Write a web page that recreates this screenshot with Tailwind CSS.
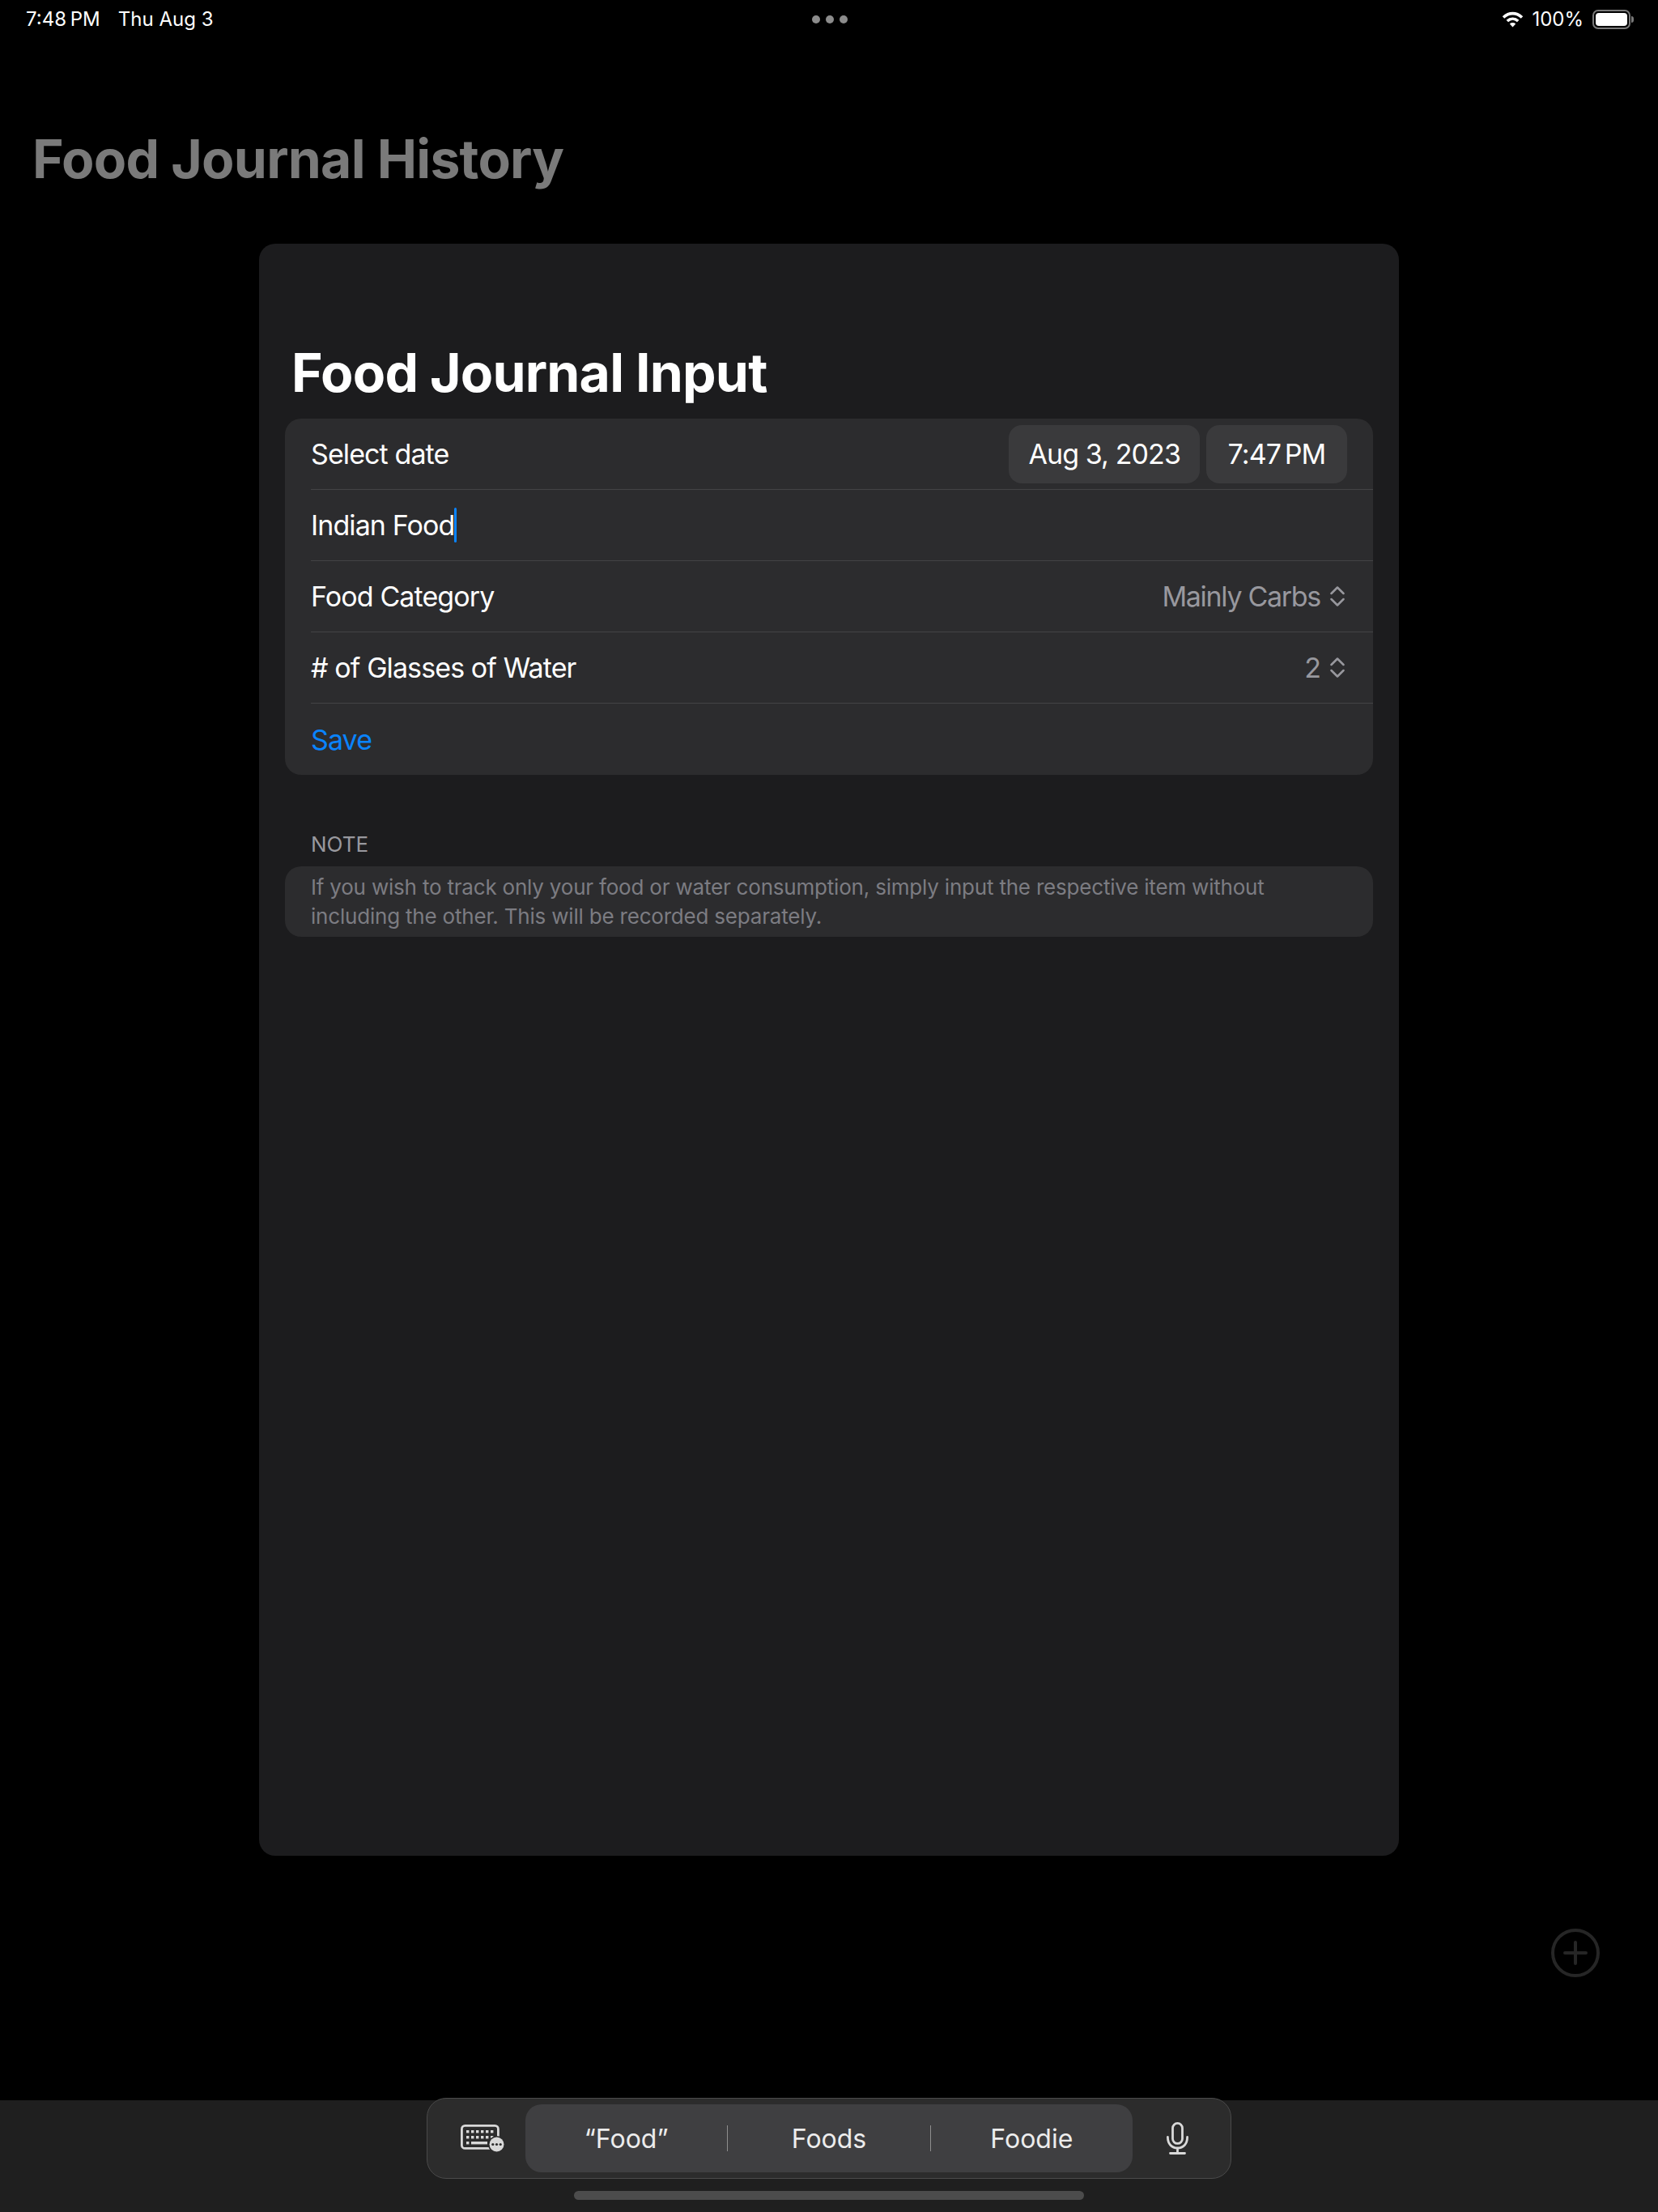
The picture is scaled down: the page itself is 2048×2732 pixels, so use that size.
<!DOCTYPE html>
<html lang="en">
<head>
    <meta charset="UTF-8">
    <meta name="viewport" content="width=device-width, initial-scale=1.0">
    <title>Food Journal Input</title>
    <script src="https://cdn.jsdelivr.net/npm/@tailwindcss/browser@4"></script>
</head>
<body class="bg-black">
    <div class="relative flex flex-col w-[2048px] h-[2732px] overflow-hidden bg-black font-['Inter',sans-serif] text-white">

        <!-- Status bar -->
        <div class="relative flex items-center justify-between h-[48px] pl-[32px] pr-[30px] text-[24px]">
            <div class="flex gap-[22px]">
                <span class="[word-spacing:-2px]">7:48 PM</span>
                <span>Thu Aug 3</span>
            </div>
            <div class="absolute left-[1003px] top-[19px] flex gap-[7px]">
                <span class="w-[10px] h-[10px] rounded-full bg-[#8c8c8c]"></span>
                <span class="w-[10px] h-[10px] rounded-full bg-[#8c8c8c]"></span>
                <span class="w-[10px] h-[10px] rounded-full bg-[#8c8c8c]"></span>
            </div>
            <div class="flex items-center">
                <svg class="w-[27px] h-[20px]" viewBox="0 0 27 20" fill="none">
                    <path d="M2 7.5C9 1 18 1 25 7.5" stroke="#fff" stroke-width="3.6" stroke-linecap="butt"/>
                    <path d="M6.8 12C10.8 8.3 16.2 8.3 20.2 12" stroke="#fff" stroke-width="3.6"/>
                    <path d="M13.5 19.5L9.8 15.4C12 13.6 15 13.6 17.2 15.4Z" fill="#fff"/>
                </svg>
                <span class="ml-[10px]">100%</span>
                <div class="ml-[11px] flex items-center">
                    <div class="w-[47px] h-[24px] rounded-[7px] border-2 border-[#7a7a7a] p-[2px]">
                        <div class="w-full h-full rounded-[4px] bg-white"></div>
                    </div>
                    <div class="ml-[1px] w-[3px] h-[8px] rounded-r-full bg-[#7a7a7a]"></div>
                </div>
            </div>
        </div>

        <!-- Page behind the sheet -->
        <h1 class="mt-[112px] ml-[40px] text-[66px] leading-[72px] font-bold tracking-[-0.75px] text-[#7a7a7a]">Food Journal History</h1>

        <!-- Add button -->
        <svg class="absolute left-[1916px] top-[2382px] w-[60px] h-[60px]" viewBox="0 0 60 60" fill="none" stroke="#262626" stroke-width="4" stroke-linecap="round">
            <circle cx="30" cy="30" r="28"/>
            <path d="M17 30H43M30 17V43"/>
        </svg>

        <!-- Sheet -->
        <div class="absolute left-[320px] top-[301px] flex flex-col w-[1408px] h-[1991px] rounded-[20px] bg-[#1c1c1e] px-[32px]">
            <h2 class="mt-[123px] ml-[8px] text-[66px] leading-[72px] font-bold tracking-[-0.8px]">Food Journal Input</h2>

            <div class="mt-[21px] rounded-[20px] bg-[#2c2c2e] text-[34px] tracking-[-0.9px]">
                <div class="flex items-center justify-between h-[88px] ml-[32px] pr-[32px] border-b border-[#434345]">
                    <span>Select date</span>
                    <div class="flex gap-[8px]">
                        <span class="flex items-center h-[72px] px-[24px] rounded-[16px] bg-[#3a3a3c]">Aug 3, 2023</span>
                        <span class="flex items-center justify-center w-[174px] h-[72px] rounded-[16px] bg-[#3a3a3c] [word-spacing:-4px]">7:47 PM</span>
                    </div>
                </div>
                <div class="flex items-center h-[88px] ml-[32px] border-b border-[#434345]">
                    <span>Indian Food</span>
                    <span class="w-[3px] h-[43px] rounded-full bg-[#0a84ff]"></span>
                </div>
                <div class="flex items-center justify-between h-[88px] ml-[32px] pr-[35px] border-b border-[#434345]">
                    <span>Food Category</span>
                    <div class="flex items-center gap-[12px] text-[#98989e]">
                        <span class="tracking-[-1.3px]">Mainly Carbs</span>
                        <svg class="w-[18px] h-[25px]" viewBox="0 0 18 25" fill="none" stroke="#98989e" stroke-width="2.5" stroke-linecap="round" stroke-linejoin="round">
                            <path d="M1.5 9L9 1.5L16.5 9M1.5 16L9 23.5L16.5 16"/>
                        </svg>
                    </div>
                </div>
                <div class="flex items-center justify-between h-[88px] ml-[32px] pr-[35px] border-b border-[#434345]">
                    <span># of Glasses of Water</span>
                    <div class="flex items-center gap-[12px] text-[#98989e]">
                        <span>2</span>
                        <svg class="w-[18px] h-[25px]" viewBox="0 0 18 25" fill="none" stroke="#98989e" stroke-width="2.5" stroke-linecap="round" stroke-linejoin="round">
                            <path d="M1.5 9L9 1.5L16.5 9M1.5 16L9 23.5L16.5 16"/>
                        </svg>
                    </div>
                </div>
                <div class="flex items-center h-[88px] ml-[32px] text-[#0a84ff]">Save</div>
            </div>

            <p class="mt-[70px] ml-[32px] text-[26px] leading-[32px] text-[#98989e]">NOTE</p>
            <div class="mt-[11px] rounded-[20px] bg-[#2c2c2e] h-[87px] px-[32px] flex items-center text-[26px] leading-[36px] tracking-[-0.2px] text-[#7c7c82]">
                <p>If you wish to track only your food or water consumption, simply input the respective item without<br>including the other. This will be recorded separately.</p>
            </div>
        </div>

        <!-- Keyboard shortcut bar -->
        <div class="relative mt-auto flex justify-center h-[138px] bg-[#1f1f1f]">
            <div class="absolute top-[-3px] left-[527px] flex items-center w-[994px] h-[100px] rounded-[24px] border border-[#4a4a4a] bg-[#2c2c2c] pl-[41px]">
                <svg class="w-[54px] h-[34px]" viewBox="0 0 54 34" fill="none">
                    <rect x="1.4" y="1.4" width="45" height="28" rx="4" stroke="#d9d9d9" stroke-width="2.8"/>
                    <g fill="#d9d9d9">
                        <rect x="7" y="7" width="3.4" height="3.4"/><rect x="13" y="7" width="3.4" height="3.4"/><rect x="19" y="7" width="3.4" height="3.4"/><rect x="25" y="7" width="3.4" height="3.4"/><rect x="31" y="7" width="3.4" height="3.4"/><rect x="37" y="7" width="3.4" height="3.4"/>
                        <rect x="7" y="14" width="3.4" height="3.4"/><rect x="13" y="14" width="3.4" height="3.4"/><rect x="19" y="14" width="3.4" height="3.4"/><rect x="25" y="14" width="3.4" height="3.4"/><rect x="31" y="14" width="3.4" height="3.4"/><rect x="37" y="14" width="3.4" height="3.4"/>
                        <rect x="7" y="21" width="3.4" height="3.4"/><rect x="13" y="21" width="20" height="3.4"/>
                    </g>
                    <circle cx="44.5" cy="24.5" r="10.5" fill="#2c2c2c"/>
                    <circle cx="44.5" cy="24.5" r="9" fill="#d9d9d9"/>
                    <g fill="#2c2c2c"><circle cx="39.8" cy="24.5" r="1.6"/><circle cx="44.5" cy="24.5" r="1.6"/><circle cx="49.2" cy="24.5" r="1.6"/></g>
                </svg>

                <div class="ml-[26px] flex items-center w-[750px] h-[84px] rounded-[20px] bg-[#3f3f41] text-[32px] text-[#ececec]">
                    <span class="flex-1 text-center pt-[2px]">“Food”</span>
                    <span class="w-[1px] h-[32px] bg-[#8e8e8e]"></span>
                    <span class="flex-1 text-center pt-[2px]">Foods</span>
                    <span class="w-[1px] h-[32px] bg-[#8e8e8e]"></span>
                    <span class="flex-1 text-center pt-[2px]">Foodie</span>
                </div>

                <svg class="ml-[42px] w-[27px] h-[40px]" viewBox="0 0 27 40" fill="none" stroke="#d9d9d9" stroke-width="2.8" stroke-linecap="round">
                    <rect x="7.5" y="1.4" width="12" height="25" rx="6"/>
                    <path d="M1.4 18.5C1.4 27 6.5 32 13.5 32S25.6 27 25.6 18.5M13.5 32V38.5M4.5 38.5H22.5"/>
                </svg>
            </div>
            <div class="absolute left-[709px] top-[112px] w-[630px] h-[11px] rounded-full bg-[#4c4c4c]"></div>
        </div>
    </div>
</body>
</html>
